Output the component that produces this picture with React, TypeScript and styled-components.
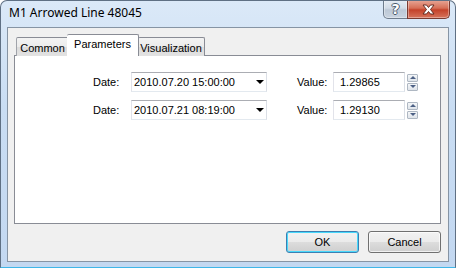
import React, {useState} from 'react';
import styled, {createGlobalStyle} from 'styled-components';

const GlobalStyle = createGlobalStyle`
  html, body {
    margin: 0;
    padding: 0;
    background: #ffffff;
  }
  * {
    box-sizing: border-box;
  }
`;

const Window = styled.div`
  width: 456px;
  height: 268px;
  display: flex;
  flex-direction: column;
  border: 1px solid #5f7084;
  border-bottom-color: #3fb6e8;
  border-radius: 7px 7px 0 0;
  background: linear-gradient(180deg, #dbe9f8 0%, #c9ddf3 40%, #c3d8f1 100%);
  overflow: hidden;
  font-family: "Liberation Sans", Arial, sans-serif;
  font-size: 11px;
  color: #000;
`;

const TitleBar = styled.div`
  height: 26px;
  display: flex;
  align-items: flex-start;
  padding-left: 8px;
`;

const Title = styled.div`
  font-family: "Noto Sans", "Open Sans", sans-serif;
  font-size: 12px;
  line-height: 14px;
  margin-top: 5px;
  color: #000;
`;

const CaptionButtons = styled.div`
  margin-left: auto;
  margin-right: 5px;
  margin-top: -1px;
  display: flex;
`;

const CaptionButton = styled.div<{$kind: 'help' | 'close'}>`
  width: ${p => (p.$kind === 'help' ? '25px' : '43px')};
  height: 19px;
  display: flex;
  align-items: center;
  justify-content: center;
  border: 1px solid ${p => (p.$kind === 'help' ? '#6e7c8c' : '#7a3a30')};
  border-top: none;
  border-radius: ${p => (p.$kind === 'help' ? '0 0 0 5px' : '0 0 5px 0')};
  margin-left: ${p => (p.$kind === 'close' ? '-1px' : '0')};
  background: ${p =>
    p.$kind === 'help'
      ? 'linear-gradient(180deg, #e6edf5 0%, #d2dce7 45%, #bcc8d6 55%, #c9d4e0 100%)'
      : 'linear-gradient(180deg, #e8a898 0%, #d66f57 45%, #c4422a 55%, #d7745c 100%)'};
  box-shadow: inset 0 0 0 1px rgba(255, 255, 255, 0.35);
`;

const HelpGlyph = styled.span`
  font-family: "DejaVu Sans", sans-serif;
  font-size: 14px;
  font-weight: bold;
  line-height: 14px;
  color: #ffffff;
  text-shadow: 1px 0 0 #4a5a6c, -1px 0 0 #4a5a6c, 0 1px 0 #4a5a6c, 0 -1px 0 #4a5a6c;
`;

const Client = styled.div`
  flex: 1;
  margin: 0 6px 5px 6px;
  border: 1px solid #8694a4;
  background: #f0f0f0;
  display: flex;
  flex-direction: column;
  padding: 7px 7px 8px 6px;
`;

const TabStrip = styled.div`
  height: 21px;
  display: flex;
  align-items: flex-end;
  padding-left: 2px;
  position: relative;
  z-index: 1;
`;

const Tab = styled.div<{$active?: boolean; $w: number}>`
  width: ${p => p.$w}px;
  height: ${p => (p.$active ? '22px' : '19px')};
  margin-left: ${p => (p.$active ? '-2px' : '0')};
  margin-right: ${p => (p.$active ? '-1px' : '0')};
  border: 1px solid #898c95;
  border-bottom: none;
  border-left-color: ${p => (p.$active ? '#898c95' : '#a0a3aa')};
  border-radius: 2px 2px 0 0;
  background: ${p => (p.$active ? '#ffffff' : 'linear-gradient(180deg, #f3f3f3 0%, #ebebeb 50%, #dcdcdc 51%, #e2e2e2 100%)')};
  display: flex;
  align-items: ${p => (p.$active ? 'flex-start' : 'center')};
  padding-top: ${p => (p.$active ? '3px' : '1px')};
  justify-content: center;
  font-size: 11px;
  position: relative;
  z-index: ${p => (p.$active ? 2 : 1)};
  & + & {
    border-left: ${p => (p.$active ? '1px solid #898c95' : 'none')};
  }
`;

const Panel = styled.div`
  flex: 1;
  margin-top: -1px;
  border: 1px solid #898c95;
  background: #ffffff;
  padding: 16px 0 0 78px;
  display: flex;
  flex-direction: column;
  gap: 8px;
`;

const Row = styled.div`
  display: flex;
  align-items: center;
  height: 20px;
`;

const Label = styled.div<{$w: number}>`
  width: ${p => p.$w}px;
  font-size: 11px;
`;

const Field = styled.div<{$w: number}>`
  width: ${p => p.$w}px;
  height: 20px;
  background: #ffffff;
  border: 1px solid;
  border-color: #abadb3 #dbdfe6 #e3e9ef #e2e3ea;
  display: flex;
  align-items: center;
  font-size: 11px;
  padding-left: 2px;
`;

const ValueField = styled(Field)`
  padding-left: 6px;
`;

const Arrow = styled.span`
  margin-left: auto;
  margin-right: 2px;
  width: 0;
  height: 0;
  border-left: 4px solid transparent;
  border-right: 4px solid transparent;
  border-top: 4px solid #000;
`;

const Gap = styled.div<{$w: number}>`
  width: ${p => p.$w}px;
`;

const Spinner = styled.div`
  margin-left: 2px;
  width: 11px;
  height: 17px;
  display: flex;
  flex-direction: column;
  gap: 1px;
`;

const SpinHalf = styled.div<{$up?: boolean}>`
  flex: 1;
  border: 1px solid #aeb7c2;
  border-radius: 1px;
  background: linear-gradient(180deg, #f4f6f8 0%, #dfe4ea 100%);
  display: flex;
  align-items: center;
  justify-content: center;
  &::after {
    content: '';
    width: 0;
    height: 0;
    border-left: 3px solid transparent;
    border-right: 3px solid transparent;
    ${p => (p.$up ? 'border-bottom: 3px solid #4d6185;' : 'border-top: 3px solid #4d6185;')}
  }
`;

const Footer = styled.div`
  display: flex;
  justify-content: flex-end;
  gap: 9px;
  margin-top: 7px;
`;

const Button = styled.button<{$default?: boolean}>`
  width: 73px;
  height: 22px;
  padding: 0;
  font-family: "Liberation Sans", Arial, sans-serif;
  font-size: 11px;
  color: #000;
  border: 1px solid ${p => (p.$default ? '#3c7fb1' : '#707070')};
  border-radius: 3px;
  background: linear-gradient(180deg, #f2f2f2 0%, #ebebeb 49%, #dddddd 50%, #cfcfcf 100%);
  box-shadow: inset 0 0 0 1px ${p => (p.$default ? '#48d8fb' : 'rgba(255,255,255,0.7)')};
`;

const rows = [
    {date: '2010.07.20 15:00:00', value: '1.29865'},
    {date: '2010.07.21 08:19:00', value: '1.29130'},
];

function CloseGlyph() {
    return (
        <svg width="15" height="11" viewBox="0 0 15 11">
            <path d="M2 1 L5.5 1 L7.5 3.5 L9.5 1 L13 1 L9.5 5.5 L13 10 L9.5 10 L7.5 7.5 L5.5 10 L2 10 L5.5 5.5 Z"
                  fill="#ffffff" stroke="#5a2218" strokeWidth="0.9" strokeLinejoin="round"/>
        </svg>
    );
}

export default function App() {
    const [tab, setTab] = useState('Parameters');
    const tabs: [string, number][] = [['Common', 53], ['Parameters', 72], ['Visualization', 67]];

    return (
        <>
            <GlobalStyle/>
            <Window>
                <TitleBar>
                    <Title>M1 Arrowed Line 48045</Title>
                    <CaptionButtons>
                        <CaptionButton $kind="help"><HelpGlyph>?</HelpGlyph></CaptionButton>
                        <CaptionButton $kind="close"><CloseGlyph/></CaptionButton>
                    </CaptionButtons>
                </TitleBar>
                <Client>
                    <TabStrip>
                        {tabs.map(([name, w]) =>
                            <Tab key={name} $w={w} $active={tab === name} onClick={() => setTab(name)}>
                                {name}
                            </Tab>
                        )}
                    </TabStrip>
                    <Panel>
                        {rows.map(r =>
                            <Row key={r.date}>
                                <Label $w={38}>Date:</Label>
                                <Field $w={136}>
                                    {r.date}
                                    <Arrow/>
                                </Field>
                                <Gap $w={30}/>
                                <Label $w={36}>Value:</Label>
                                <ValueField $w={72}>{r.value}</ValueField>
                                <Spinner>
                                    <SpinHalf $up/>
                                    <SpinHalf/>
                                </Spinner>
                            </Row>
                        )}
                    </Panel>
                    <Footer>
                        <Button $default>OK</Button>
                        <Button>Cancel</Button>
                    </Footer>
                </Client>
            </Window>
        </>
    );
}
